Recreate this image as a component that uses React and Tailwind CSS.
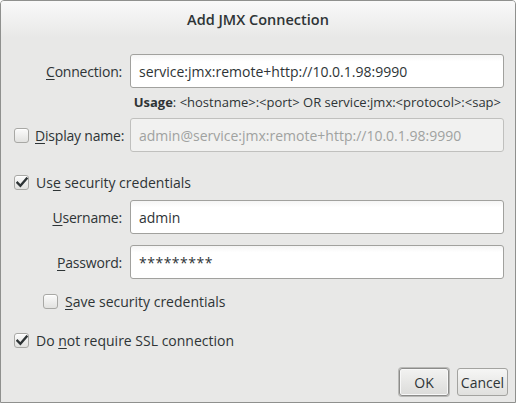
import React from "react";

// GTK-like "Add JMX Connection" dialog

function Check({ checked }) {
  return (
    <span className="flex h-[15px] w-[15px] shrink-0 items-center justify-center rounded-[3px] border border-[#a8a8a5] bg-gradient-to-b from-[#fbfbfb] to-[#e2e2e0] shadow-[inset_0_1px_0_#ffffff]">
      {checked && (
        <svg width="12" height="11" viewBox="0 0 12 11">
          <path d="M1.5 5.8 L4.4 8.8 L10.6 1.6" fill="none" stroke="#2e3436" strokeWidth="2.4" strokeLinecap="square" />
        </svg>
      )}
    </span>
  );
}

function Mn({ children }) {
  return <span className="underline decoration-1 underline-offset-[2px]">{children}</span>;
}

function Field({ value, disabled, className = "" }) {
  return (
    <div
      className={`flex h-[34px] flex-1 items-center whitespace-nowrap rounded-[3px] border px-[8px] text-[14px] ${
        disabled
          ? "border-[#c0c0be] bg-[#f1f1f0] text-[#a0a2a0]"
          : "border-[#a1a19e] bg-gradient-to-b from-[#f5f5f5] to-[#ffffff] to-[20%] text-[#2e3436]"
      } ${className}`}
    >
      {value}
    </div>
  );
}

export default function App() {
  return (
    <div
      className="flex h-[403px] w-[516px] flex-col overflow-hidden rounded-t-[4px] border border-[#8f908e] bg-[#e8e8e7] text-[#2e3436]"
      style={{ fontFamily: '"Open Sans", "DejaVu Sans", sans-serif' }}
    >
      {/* title bar */}
      <div className="flex h-[37px] shrink-0 items-center justify-center bg-gradient-to-b from-[#f9f9f9] to-[#e8e8e7] text-[14.5px] font-semibold text-[#2e3436]">
        Add JMX Connection
      </div>

      <div className="flex flex-1 flex-col pl-[13px] pr-[11px] pt-[16px] text-[14px]">
        <div className="flex items-center">
          <div className="w-[116px] whitespace-nowrap pr-[8px] text-right tracking-[-0.2px]">
            <Mn>C</Mn>onnection:
          </div>
          <Field value="service:jmx:remote+http://10.0.1.98:9990" />
        </div>
        <div className="mt-[5px] pr-[3px] text-right text-[13px] leading-[18px]">
          <span className="font-bold">Usage</span>: &lt;hostname&gt;:&lt;port&gt; OR service:jmx:&lt;protocol&gt;:&lt;sap&gt;
        </div>

        <div className="mt-[7px] flex items-center">
          <div className="flex w-[116px] items-center gap-[6px] whitespace-nowrap pr-[8px] tracking-[-0.2px]">
            <Check />
            <span>
              <Mn>D</Mn>isplay name:
            </span>
          </div>
          <Field value="admin@service:jmx:remote+http://10.0.1.98:9990" disabled />
        </div>

        <div className="mt-[23px] flex items-center gap-[7px] leading-[15px]">
          <Check checked />
          <span>
            Us<Mn>e</Mn> security credentials
          </span>
        </div>

        <div className="mt-[10px] flex items-center">
          <div className="w-[116px] whitespace-nowrap pr-[8px] text-right tracking-[-0.2px]">
            <Mn>U</Mn>sername:
          </div>
          <Field value="admin" />
        </div>
        <div className="mt-[11px] flex items-center">
          <div className="w-[116px] whitespace-nowrap pr-[8px] text-right tracking-[-0.2px]">
            <Mn>P</Mn>assword:
          </div>
          <Field value="*********" className="tracking-[0.5px]" />
        </div>

        <div className="mt-[15px] flex items-center gap-[7px] pl-[29px] leading-[15px]">
          <Check />
          <span>
            <Mn>S</Mn>ave security credentials
          </span>
        </div>

        <div className="mt-[24px] flex items-center gap-[7px] leading-[15px]">
          <Check checked />
          <span>
            Do <Mn>n</Mn>ot require SSL connection
          </span>
        </div>

        <div className="-mr-[4px] mb-[6px] mt-auto flex justify-end gap-[8px]">
          <button className="flex h-[28px] w-[50px] items-center justify-center rounded-[3px] border border-[#8c8c8a] bg-gradient-to-b from-[#f2f2f1] to-[#dcdcda] text-[14px] text-[#2e3436] shadow-[inset_0_0_0_1px_#f8f8f8,0_0_0_1px_#b9b9b7]">
            OK
          </button>
          <button className="flex h-[28px] w-[51px] items-center justify-center rounded-[3px] border border-[#a3a3a0] bg-gradient-to-b from-[#f6f6f5] to-[#e0e0de] text-[14px] text-[#2e3436]">
            Cancel
          </button>
        </div>
      </div>
    </div>
  );
}
